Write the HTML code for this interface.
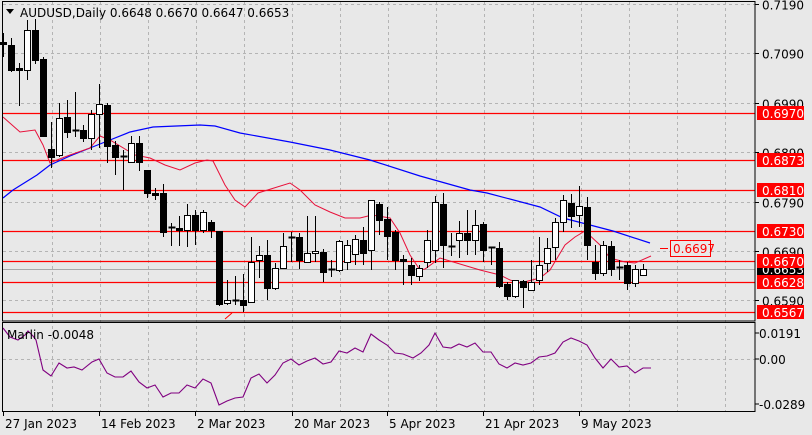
<!DOCTYPE html>
<html><head><meta charset="utf-8"><style>
html,body{margin:0;padding:0;background:#e8e8e8;width:812px;height:435px;overflow:hidden}
svg{display:block;font-family:Tahoma,"DejaVu Sans","Liberation Sans",sans-serif}
</style></head><body>
<svg id="s" width="812" height="435" xmlns="http://www.w3.org/2000/svg">
<rect width="812" height="435" fill="#e8e8e8"/>
<g id="grid" stroke="#b4b4b4" stroke-dasharray="3,3" stroke-width="1"></g>
<g id="lines"></g>
<g id="c"></g>
<rect x="2.5" y="1.5" width="752.5" height="319.5" fill="none" stroke="#000"/>
<rect x="2.5" y="322.5" width="752.5" height="89" fill="none" stroke="#000"/>
<g id="axis" font-size="12"></g>
<text x="20" y="17" font-size="12" fill="#000">AUDUSD,Daily  0.6648 0.6670 0.6647 0.6653</text>
<path d="M6 9 L14 9 L10 14 Z" fill="#000"/>
<text x="7" y="339" font-size="12" fill="#000">Marlin -0.0048</text>
</svg>
<script>
var NS="http://www.w3.org/2000/svg";
function el(p,t,a,tx){var e=document.createElementNS(NS,t);for(var k in a)e.setAttribute(k,a[k]);if(tx!==undefined)e.textContent=tx;document.getElementById(p).appendChild(e);return e;}
var gy=[4.5,53.5,103.5,152.5,202.5,251.5,300.5];
gy.forEach(function(y){el('grid','line',{x1:3,x2:755,y1:y,y2:y});});
el('grid','line',{x1:3,x2:755,y1:359.5,y2:359.5});
for(var i=1;i<16;i++){var x=Math.round(3.4+48.1*i)+.5;el('grid','line',{x1:x,x2:x,y1:2,y2:411});}
[113,160,190,231,261,282,312].forEach(function(y){el('lines','line',{x1:3,x2:755,y1:y+.5,y2:y+.5,stroke:'#ff0000','stroke-width':1.3});});
el('lines','line',{x1:3,x2:755,y1:269.5,y2:269.5,stroke:'#a8a8a8'});
el('lines','polyline',{fill:'none',stroke:'#0000ff','stroke-width':1.2,points:"3,198 13,190 37,175 50,165 70,156 90,148 110,140 130,132 153,127 200,125 215,126 240,133 290,142 330,150 370,160 420,176 470,190 487,193 540,207 563,218 590,225 613,231 650,243"});
el('lines','polyline',{fill:'none',stroke:'#e8103a','stroke-width':1,points:"3,117 20,132 35,130 43,145 50,163 57,160 70,155 90,148 100,136 110,140 135,155 150,158 165,165 180,170 195,163 207,160 213,161 225,185 235,200 245,207 258,193 290,183 300,190 315,205 330,212 345,218 360,218 372,215 390,218 400,233 410,255 420,270 425,269 440,258 480,270 500,275 510,280 520,283 540,278 550,270 565,245 575,237 585,231 600,245 610,258 625,262 635,263 651,256"});
el('lines','line',{x1:225,y1:319,x2:232,y2:313,stroke:'#ff0000'});
var A=[
['b',42,44,33,57],['b',45,70,38,72],['b',68,70,63,106],['w',30,70,20,80],['b',30,60,19,64],['b',59,136,57,137],['b',149,157,122,168],['w',118,155,103,157],['b',117,132,100,138],['d',130,131,92,137],
['b',130,138,125,142],['w',114,138,110,150],['w',104,114,84,148],['b',105,146,103,163],['b',145,157,141,175],['d',156,157,150,190],['w',143,162,136,163],['b',143,162,136,171],['b',170,193,170,198],['b',193,195,188,200],
['b',193,232,184,237],['d',227,228,223,246],['b',228,230,216,246],['w',215,230,204,247],['b',215,230,210,245],['w',212,230,210,233],['b',222,230,220,238],['b',231,304,231,306],['w',300,303,280,305],['d',300,301,276,305],
['b',300,305,274,312],['w',262,302,237,302],['w',255,260,246,278],['b',255,288,240,300],['w',268,288,263,290],['w',246,268,233,268],['d',237,238,232,262],['b',237,260,233,269],['w',253,262,216,262],['w',251,253,216,262],
['b',252,272,249,282],['d',269,270,260,277],['w',241,270,240,272],['w',245,262,240,270],['w',239,254,235,265],['b',240,253,227,265],['w',200,250,200,270],['b',204,220,202,235],['b',219,236,207,260],['b',232,260,230,270],['b',259,261,255,285],
['b',265,275,258,285],['w',268,276,265,281],['w',240,262,230,268],['w',202,250,196,263],['b',204,245,193,268],['d',246,247,233,256],['w',233,240,221,258],['b',233,240,210,255],['w',225,240,210,255],['b',224,250,222,262],['d',247,248,247,265],
['b',248,286,242,288],['b',284,296,282,300],['w',280,296,282,298],['b',281,287,280,308],['w',282,290,260,290],['w',265,280,237,285],['w',248,263,238,272],['w',222,247,218,260],['w',200,222,195,232],
['b',203,216,194,228],['w',206,215,186,227],['b',207,245,197,260],['b',262,273,245,280],['w',245,273,241,276],['b',246,269,241,276],['d',267,268,260,280],['b',265,283,262,290],['w',269,283,265,287],['w',269,275,264,275]];
A.forEach(function(c,i){var x=3+8*i+.5;
 el('c','line',{x1:x,x2:x,y1:c[3],y2:c[4],stroke:'#000'});
 if(c[0]=='d'){el('c','line',{x1:x-3,x2:x+4,y1:c[1]+.5,y2:c[1]+.5,stroke:'#000','stroke-width':2});}
 else el('c','rect',{x:x-3,y:c[1]+.5,width:6,height:Math.max(1,c[2]-c[1]),fill:c[0]=='b'?'#000':'#fff',stroke:'#000'});
});
el('lines','polyline',{fill:'none',stroke:'#800080','stroke-width':1.1,points:"3,328 10,337 18,340 25,335 28,331 33,336 36,340 43,370 51,376 59,363 67,368 74,367 82,370 92,362 99,359 107,373 115,377 123,377 131,371 139,382 147,388 155,385 163,397 171,393 179,393 187,385 195,388 203,379 211,383 219,405 227,401 235,398 243,397 251,378 259,374 267,383 275,375 283,363 291,359 299,365 307,361 315,358 323,364 331,362 339,351 347,353 355,348 363,352 371,334 379,340 387,345 395,353 403,354 413,358 421,353 429,345 435,333 443,347 451,348 459,344 467,347 475,343 483,352 491,352 499,364 507,368 515,363 523,365 531,363 539,357 547,356 555,353 563,342 571,338 579,341 587,345 595,358 603,368 611,359 619,367 627,366 635,373 643,368 651,368"});
[['0.7190',4.5],['0.7090',53.5],['0.6990',103.5],['0.6890',152.5],['0.6790',202.5],['0.6690',251.5],['0.6590',300.5]].forEach(function(a){
 el('axis','line',{x1:755,x2:759,y1:a[1],y2:a[1],stroke:'#000'});
 el('axis','text',{x:762,y:a[1]+5,fill:'#000'},a[0]);});
el('axis','rect',{x:757,y:262,width:47,height:14,fill:'#000'});
el('axis','text',{x:762,y:274,fill:'#fff'},'0.6653');
[['0.6970',113],['0.6873',160],['0.6810',190],['0.6730',231],['0.6670',261],['0.6628',282],['0.6567',312]].forEach(function(a){
 el('axis','rect',{x:757,y:a[1]-7,width:47,height:14,fill:'#ff0000'});
 el('axis','text',{x:762,y:a[1]+5,fill:'#fff'},a[0]);});
[['0.0191',333],['0.00',359],['-0.0289',404]].forEach(function(a){
 el('axis','line',{x1:755,x2:759,y1:a[1],y2:a[1],stroke:'#000'});
 el('axis','text',{x:759,y:a[1]+5,fill:'#000'},a[0]);});
[['27 Jan 2023',3],['14 Feb 2023',99],['2 Mar 2023',195],['20 Mar 2023',292],['5 Apr 2023',387],['21 Apr 2023',483],['9 May 2023',579]].forEach(function(a){
 el('axis','line',{x1:a[1]+.5,x2:a[1]+.5,y1:411,y2:416,stroke:'#000'});
 el('axis','text',{x:a[1]+2,y:428,fill:'#000'},a[0]);});
el('axis','line',{x1:660,x2:668,y1:248.5,y2:248.5,stroke:'#ff0000'});
el('axis','rect',{x:670.5,y:240.5,width:40,height:16,fill:'#e8e8e8',stroke:'#ff0000'});
el('axis','text',{x:673,y:253,fill:'#ff0000'},'0.6697');
</script>
</body></html>
